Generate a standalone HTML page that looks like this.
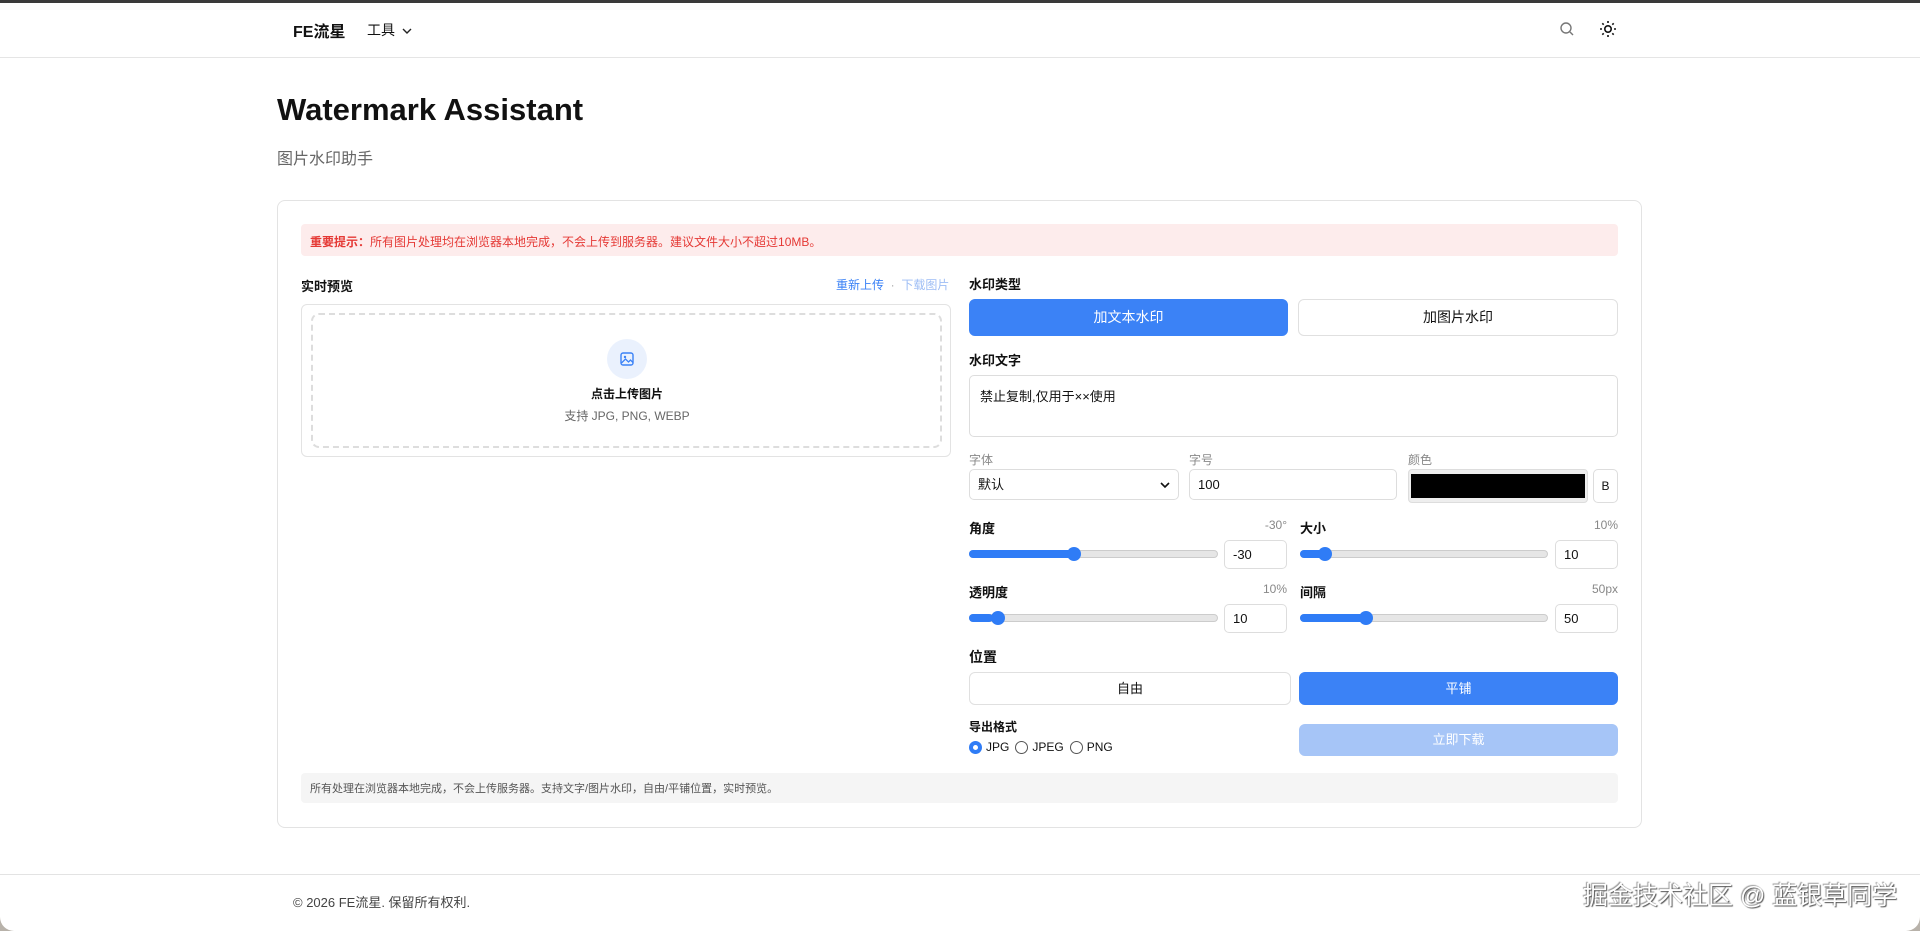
<!DOCTYPE html>
<html><head><meta charset="utf-8"><style>
*{box-sizing:border-box;margin:0;padding:0}
body{width:1920px;height:931px;overflow:hidden;background:#b8b2aa;font-family:"Liberation Sans","Noto Sans CJK SC",sans-serif;color:#111;position:relative}
.page{position:absolute;left:0;top:0;width:1920px;height:931px;background:#fff;border-radius:0 0 14px 14px;overflow:hidden}
.topbar{position:absolute;left:0;top:0;width:1920px;height:3px;background:#3a3a3a}
.nav{position:absolute;left:0;top:3px;width:1920px;height:55px;border-bottom:1px solid #e5e5e5}
.abs{position:absolute}
.t{position:absolute;white-space:nowrap}
.card{position:absolute;left:277px;top:200px;width:1365px;height:628px;border:1px solid #e3e3e3;border-radius:8px}
.btn{position:absolute;border:1px solid #e0e0e0;border-radius:6px;background:#fff;text-align:center;font-size:14px}
.blue{background:#3b82f6;border-color:#3b82f6;color:#fff}
.inp{position:absolute;border:1px solid #ddd;border-radius:5px;background:#fff;font-size:13px;padding-left:8px}
.lbl{font-size:13px;font-weight:bold}
.track{position:absolute;height:8px;border-radius:4px;background:#e6e6e6;border:1px solid #ccc}
.fill{position:absolute;height:8px;border-radius:4px;background:#2f7cf6}
.knob{position:absolute;width:14px;height:14px;border-radius:50%;background:#2f7cf6}
.gray{color:#888;font-size:12px}
</style></head><body>
<div class="page">
<div class="topbar"></div>
<div class="nav">
 <div class="t" style="left:293px;top:15px;font-size:16px;font-weight:bold">FE流星</div>
 <div class="t" style="left:367px;top:17px;font-size:14px">工具 <svg width="10" height="8" viewBox="0 0 10 8" style="margin-left:3px"><path d="M1 2l4 4 4-4" stroke="#222" stroke-width="1.4" fill="none"/></svg></div>
 <svg class="abs" style="left:1559px;top:18px" width="16" height="16" viewBox="0 0 16 16"><circle cx="7" cy="7" r="5" stroke="#777" stroke-width="1.4" fill="none"/><path d="M11 11l3 3" stroke="#777" stroke-width="1.4"/></svg>
 <svg class="abs" style="left:1599px;top:17px" width="18" height="18" viewBox="0 0 18 18"><circle cx="9" cy="9" r="3.2" stroke="#111" stroke-width="1.6" fill="none"/><g stroke="#111" stroke-width="1.6"><path d="M9 1v2M9 15v2M1 9h2M15 9h2M3.3 3.3l1.4 1.4M13.3 13.3l1.4 1.4M3.3 14.7l1.4-1.4M13.3 4.7l1.4-1.4"/></g></svg>
</div>
<div class="t" style="left:277px;top:92px;font-size:31px;font-weight:bold">Watermark Assistant</div>
<div class="t" style="left:277px;top:145px;font-size:16px;color:#666">图片水印助手</div>
<div class="card"></div>
<div class="abs" style="left:301px;top:224px;width:1317px;height:32px;background:#fdecec;border-radius:4px"></div>
<div class="t" style="left:310px;top:233px;font-size:12px;color:#e53935"><b>重要提示：</b>所有图片处理均在浏览器本地完成，不会上传到服务器。建议文件大小不超过10MB。</div>
<div class="t lbl" style="left:301px;top:276px">实时预览</div>
<div class="t" style="left:836px;top:276px;font-size:12px;color:#3b82f6">重新上传 <span style="color:#aaa">&nbsp;·&nbsp;</span> <span style="color:#9dbdf5">下载图片</span></div>
<div class="abs" style="left:301px;top:304px;width:650px;height:153px;border:1px solid #e3e3e3;border-radius:6px"></div>
<div class="abs" style="left:311px;top:313px;width:631px;height:135px;border:2px dashed #ddd;border-radius:8px"></div>
<div class="abs" style="left:607px;top:339px;width:40px;height:40px;border-radius:50%;background:#eaf1fd"></div>
<svg class="abs" style="left:619px;top:351px" width="16" height="16" viewBox="0 0 16 16"><rect x="2" y="2" width="12" height="12" rx="2" stroke="#3b82f6" stroke-width="1.4" fill="none"/><circle cx="6" cy="6" r="1.2" fill="#3b82f6"/><path d="M2.5 12l4-4 3 3 2-2 2.5 2.5" stroke="#3b82f6" stroke-width="1.3" fill="none"/></svg>
<div class="t" style="left:0;width:1254px;text-align:center;top:385px;font-size:12px;font-weight:bold">点击上传图片</div>
<div class="t" style="left:0;width:1254px;text-align:center;top:407px;font-size:12px;color:#666">支持 JPG, PNG, WEBP</div>

<div class="t lbl" style="left:969px;top:274px">水印类型</div>
<div class="btn blue" style="left:969px;top:299px;width:319px;height:37px;line-height:35px">加文本水印</div>
<div class="btn" style="left:1298px;top:299px;width:320px;height:37px;line-height:35px">加图片水印</div>
<div class="t lbl" style="left:969px;top:350px">水印文字</div>
<div class="inp" style="left:969px;top:375px;width:649px;height:62px;padding:10px 10px;font-size:13px">禁止复制,仅用于××使用</div>
<div class="t gray" style="left:969px;top:451px">字体</div>
<div class="t gray" style="left:1189px;top:451px">字号</div>
<div class="t gray" style="left:1408px;top:451px">颜色</div>
<div class="inp" style="left:969px;top:469px;width:210px;height:31px;line-height:29px">默认<svg class="abs" style="right:8px;top:11px" width="10" height="8" viewBox="0 0 10 8"><path d="M1 2l4 4 4-4" stroke="#111" stroke-width="1.6" fill="none"/></svg></div>
<div class="inp" style="left:1189px;top:469px;width:208px;height:31px;line-height:29px">100</div>
<div class="abs" style="left:1408px;top:469px;width:180px;height:34px;background:#eee;border-radius:4px;border:1px solid #ddd"></div>
<div class="abs" style="left:1411px;top:474px;width:174px;height:24px;background:#000"></div>
<div class="inp" style="left:1593px;top:469px;width:25px;height:34px;line-height:32px;padding:0;text-align:center;font-size:12px">B</div>

<div class="t lbl" style="left:969px;top:518px">角度</div><div class="t gray" style="left:1227px;width:60px;text-align:right;top:518px">-30°</div>
<div class="t lbl" style="left:1300px;top:518px">大小</div><div class="t gray" style="left:1558px;width:60px;text-align:right;top:518px">10%</div>
<div class="track" style="left:969px;top:550px;width:249px"></div><div class="fill" style="left:969px;top:550px;width:108px"></div><div class="knob" style="left:1067px;top:547px"></div>
<div class="inp" style="left:1224px;top:540px;width:63px;height:29px;line-height:27px">-30</div>
<div class="track" style="left:1300px;top:550px;width:248px"></div><div class="fill" style="left:1300px;top:550px;width:24px"></div><div class="knob" style="left:1318px;top:547px"></div>
<div class="inp" style="left:1555px;top:540px;width:63px;height:29px;line-height:27px">10</div>

<div class="t lbl" style="left:969px;top:582px">透明度</div><div class="t gray" style="left:1227px;width:60px;text-align:right;top:582px">10%</div>
<div class="t lbl" style="left:1300px;top:582px">间隔</div><div class="t gray" style="left:1558px;width:60px;text-align:right;top:582px">50px</div>
<div class="track" style="left:969px;top:614px;width:249px"></div><div class="fill" style="left:969px;top:614px;width:24px"></div><div class="knob" style="left:991px;top:611px"></div>
<div class="inp" style="left:1224px;top:604px;width:63px;height:29px;line-height:27px">10</div>
<div class="track" style="left:1300px;top:614px;width:248px"></div><div class="fill" style="left:1300px;top:614px;width:66px"></div><div class="knob" style="left:1359px;top:611px"></div>
<div class="inp" style="left:1555px;top:604px;width:63px;height:29px;line-height:27px">50</div>

<div class="t lbl" style="left:969px;top:647px;font-size:14px">位置</div>
<div class="btn" style="left:969px;top:672px;width:322px;height:33px;line-height:31px;font-size:13px">自由</div>
<div class="btn blue" style="left:1299px;top:672px;width:319px;height:33px;line-height:31px;font-size:13px">平铺</div>
<div class="t lbl" style="left:969px;top:718px;font-size:12px">导出格式</div>
<div class="t" style="left:969px;top:740px;font-size:12px;display:flex;align-items:center;gap:4px">
<span style="width:13px;height:13px;border-radius:50%;border:4px solid #2f7cf6;display:inline-block"></span>JPG
<span style="width:13px;height:13px;border-radius:50%;border:1px solid #555;display:inline-block;margin-left:2px"></span>JPEG
<span style="width:13px;height:13px;border-radius:50%;border:1px solid #555;display:inline-block;margin-left:2px"></span>PNG</div>
<div class="btn" style="left:1299px;top:724px;width:319px;height:32px;line-height:30px;background:#a6c5f7;border-color:#a6c5f7;color:#fff;font-size:13px">立即下载</div>
<div class="abs" style="left:301px;top:773px;width:1317px;height:30px;background:#f5f5f5;border-radius:4px"></div>
<div class="t" style="left:310px;top:780px;font-size:11px;color:#555">所有处理在浏览器本地完成，不会上传服务器。支持文字/图片水印，自由/平铺位置，实时预览。</div>
<div class="abs" style="left:0;top:874px;width:1920px;height:1px;background:#e3e3e3"></div>
<div class="t" style="left:293px;top:892px;font-size:13px;color:#444">© 2026 FE流星. 保留所有权利.</div>
<div class="t" style="left:1583px;top:876px;font-size:25px;color:#fff;text-shadow:1px 1px 1px #555,-1px -1px 1px #999">掘金技术社区 @ 蓝银草同学</div>
</div>
</body></html>
